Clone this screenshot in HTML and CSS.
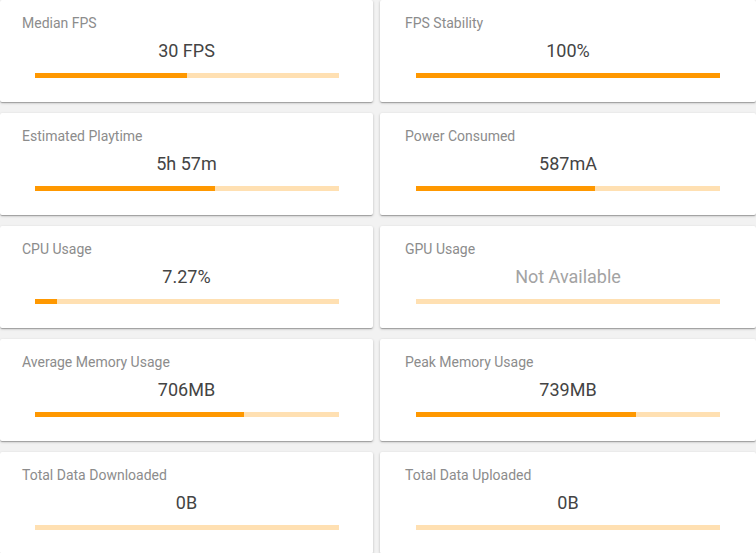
FILE: index.html
```html
<!DOCTYPE html>
<html>
<head>
<meta charset="utf-8">
<link rel="stylesheet" href="styles.css">
</head>
<body>
<div class="grid">
  <div class="card"><div class="title">Median FPS</div><div class="value">30 FPS</div><div class="bar"><div class="fill" style="width:50%"></div></div></div>
  <div class="card"><div class="title">FPS Stability</div><div class="value">100%</div><div class="bar"><div class="fill" style="width:100%"></div></div></div>
  <div class="card"><div class="title">Estimated Playtime</div><div class="value">5h 57m</div><div class="bar"><div class="fill" style="width:59.5%"></div></div></div>
  <div class="card"><div class="title">Power Consumed</div><div class="value">587mA</div><div class="bar"><div class="fill" style="width:59%"></div></div></div>
  <div class="card"><div class="title">CPU Usage</div><div class="value">7.27%</div><div class="bar"><div class="fill" style="width:7.27%"></div></div></div>
  <div class="card"><div class="title">GPU Usage</div><div class="value na">Not Available</div><div class="bar"></div></div>
  <div class="card"><div class="title">Average Memory Usage</div><div class="value">706MB</div><div class="bar"><div class="fill" style="width:69%"></div></div></div>
  <div class="card"><div class="title">Peak Memory Usage</div><div class="value">739MB</div><div class="bar"><div class="fill" style="width:72.4%"></div></div></div>
  <div class="card"><div class="title">Total Data Downloaded</div><div class="value">0B</div><div class="bar"></div></div>
  <div class="card"><div class="title">Total Data Uploaded</div><div class="value">0B</div><div class="bar"></div></div>
</div>
</body>
</html>
```
FILE: styles.css
```css
html, body {
  margin: 0;
  padding: 0;
  background: #f2f2f2;
  font-family: Roboto, "Liberation Sans", sans-serif;
  overflow: hidden;
}
.grid {
  display: grid;
  grid-template-columns: 373px 376px;
  column-gap: 7px;
  row-gap: 11px;
}
.card {
  background: #fff;
  height: 102px;
  box-sizing: border-box;
  padding: 15px 22px 0;
  border-radius: 2px;
  box-shadow: 0 1px 3px rgba(0,0,0,0.2), 0 1px 1px rgba(0,0,0,0.14), 0 2px 1px -1px rgba(0,0,0,0.12);
}
.card:nth-child(even) {
  padding-left: 25px;
  padding-right: 25px;
}
.title {
  font-size: 14px;
  line-height: 17px;
  color: #8c8c8c;
}
.value {
  margin-top: 8px;
  font-size: 18px;
  line-height: 22px;
  color: #444;
  text-align: center;
}
.value.na {
  color: #a3a3a3;
}
.bar {
  width: 304px;
  margin: 11px auto 0;
  height: 5px;
  background: #ffe0b2;
}
.fill {
  height: 100%;
  background: #ff9800;
}
```
